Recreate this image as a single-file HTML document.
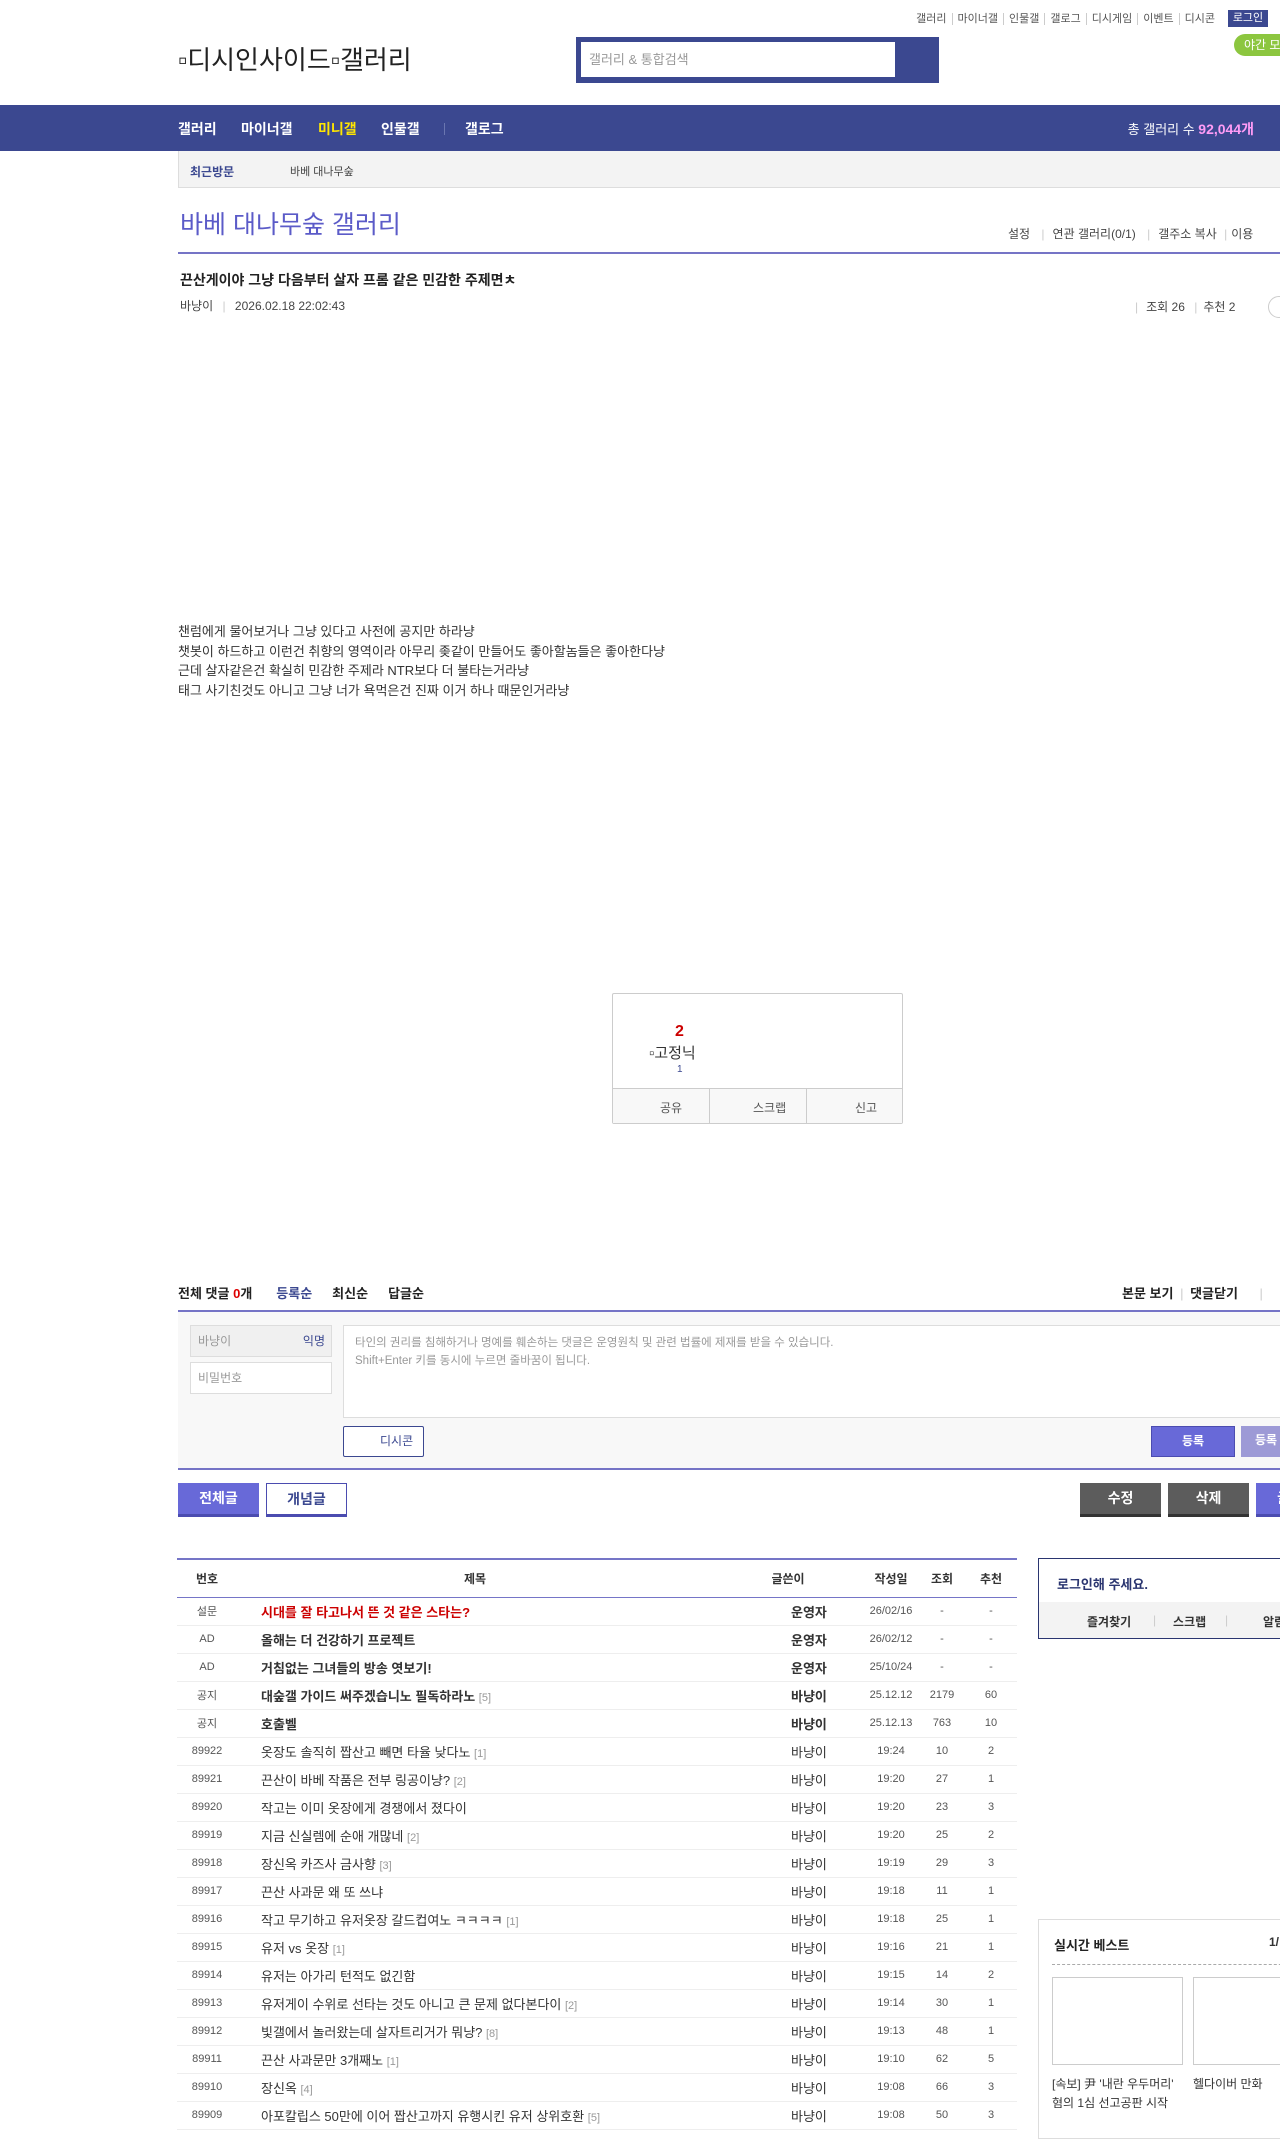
<!DOCTYPE html>
<html><head><meta charset="utf-8"><style>
*{margin:0;padding:0;box-sizing:border-box}
body{width:1280px;height:2124px;overflow:hidden;position:relative;background:#fff;font-family:"Liberation Sans","Noto Sans CJK KR",sans-serif;color:#333;font-size:12px}
.a{position:absolute;white-space:nowrap}
.util{top:10px;right:60px;font-size:11px;color:#555}
.util span{padding:0 5px;border-left:1px solid #ccc}
.util span:first-child{border:none}
.nav{left:0;top:105px;width:1280px;height:46px;background:#3b4890}
.nav b{position:absolute;top:14px;color:#fff;font-size:14px}
table{border-collapse:collapse;table-layout:fixed;position:absolute;left:177px;top:1558px;width:840px;font-size:12px}
th{height:38px;border-top:2px solid #7575c7;border-bottom:1px solid #7575c7;font-size:12px;color:#333}
td{height:28px;border-bottom:1px solid #eee;text-align:center;color:#333}
td.t{text-align:left;padding-left:24px;font-size:13px}
td.w{font-size:13px;text-align:left;padding-left:78px}
td.n{font-size:11px;color:#555}
.r{color:#999;font-size:11px}
.btn{position:absolute;height:34px;line-height:30px;text-align:center;font-size:14px;font-weight:bold}
</style></head><body>
<div class="a util"><span>갤러리</span><span>마이너갤</span><span>인물갤</span><span>갤로그</span><span>디시게임</span><span>이벤트</span><span>디시콘</span></div>
<div class="a" style="left:1228px;top:10px;width:40px;height:17px;background:#3b4890;color:#fff;font-size:11px;text-align:center;line-height:17px">로그인</div>
<div class="a" style="left:1234px;top:34px;width:60px;height:22px;background:#8cc63f;border-radius:11px;color:#fff;font-size:12px;line-height:22px;padding-left:10px">야간 모드</div>
<div class="a" style="left:178px;top:40px;font-size:26px;color:#222">▫디시인사이드▫갤러리</div>
<div class="a" style="left:576px;top:37px;width:363px;height:46px;background:#3b4890"></div>
<div class="a" style="left:581px;top:42px;width:314px;height:35px;background:#fff;color:#999;font-size:13px;line-height:35px;padding-left:8px">갤러리 &amp; 통합검색</div>
<div class="a nav"><b style="left:178px">갤러리</b><b style="left:241px">마이너갤</b><b style="left:318px;color:#ffe600">미니갤</b><b style="left:381px">인물갤</b><span style="position:absolute;left:444px;top:18px;width:1px;height:12px;background:#6a76b0"></span><b style="left:465px">갤로그</b><span style="position:absolute;right:26px;top:14px;color:#fff;font-size:13px">총 갤러리 수 <b style="position:static;color:#ff9cf6">92,044개</b></span></div>
<div class="a" style="left:178px;top:151px;width:1110px;height:37px;background:#f3f3f3;border:1px solid #ddd;border-top:none"></div>
<div class="a" style="left:190px;top:163px;font-size:12px;color:#3b4890;font-weight:bold">최근방문</div>
<div class="a" style="left:290px;top:163px;font-size:11px;color:#444">바베 대나무숲</div>
<div class="a" style="left:180px;top:205px;font-size:25px;color:#5b5bc8">바베 대나무숲 갤러리</div>
<div class="a" style="left:1008px;top:225px;font-size:12px;color:#444">설정 <span style="color:#ccc;margin:0 8px">|</span>연관 갤러리(0/1) <span style="color:#ccc;margin:0 8px">|</span>갤주소 복사 <span style="color:#ccc;margin:0 4px">|</span>이용</div>
<div class="a" style="left:178px;top:252px;width:1110px;height:2px;background:#7574c6"></div>
<div class="a" style="left:180px;top:270px;font-size:14px;font-weight:bold;color:#222">끈산게이야 그냥 다음부터 살자 프롬 같은 민감한 주제면ㅊ</div>
<div class="a" style="left:180px;top:297px;font-size:12px;color:#444">바냥이 <span style="color:#ccc;margin:0 6px">|</span> 2026.02.18 22:02:43</div>
<div class="a" style="left:1135px;top:298px;font-size:12px;color:#444"><span style="color:#ccc;margin-right:8px">|</span>조회 26 <span style="color:#ccc;margin:0 6px">|</span>추천 2</div>
<div class="a" style="left:1268px;top:296px;width:22px;height:22px;border:1px solid #ccc;border-radius:11px"></div>
<div class="a" style="left:178px;top:622px;font-size:13px;line-height:19.7px;color:#333">챈럼에게 물어보거나 그냥 있다고 사전에 공지만 하라냥<br>챗봇이 하드하고 이런건 취향의 영역이라 아무리 좆같이 만들어도 좋아할놈들은 좋아한다냥<br>근데 살자같은건 확실히 민감한 주제라 NTR보다 더 불타는거라냥<br>태그 사기친것도 아니고 그냥 너가 욕먹은건 진짜 이거 하나 때문인거라냥</div>
<div class="a" style="left:612px;top:993px;width:291px;height:131px;border:1px solid #ccc;border-radius:2px">
<div class="a" style="left:62px;top:29px;font-size:16px;font-weight:bold;color:#c00">2</div>
<div class="a" style="left:36px;top:48px;font-size:15px;color:#333">▫고정닉</div>
<div class="a" style="left:64px;top:70px;font-size:10px;color:#3b4890">1</div>
<div class="a" style="left:0;top:94px;width:289px;height:35px;background:#f8f8f8;border-top:1px solid #ccc;font-size:12px;color:#555">
<span class="a" style="left:47px;top:10px">공유</span><span class="a" style="left:96px;top:0;width:1px;height:35px;background:#ccc"></span><span class="a" style="left:140px;top:10px">스크랩</span><span class="a" style="left:193px;top:0;width:1px;height:35px;background:#ccc"></span><span class="a" style="left:242px;top:10px">신고</span></div></div>
<div class="a" style="left:178px;top:1283px;font-size:13px;font-weight:bold;color:#222">전체 댓글 <span style="color:#d00">0</span>개<span style="color:#3b4890;margin-left:24px">등록순</span><span style="margin-left:20px">최신순</span><span style="margin-left:20px">답글순</span></div>
<div class="a" style="left:1122px;top:1283px;font-size:13px;font-weight:bold;color:#222">본문 보기 <span style="color:#ccc;font-weight:normal;margin:0 3px">|</span> 댓글닫기 <span style="color:#ccc;font-weight:normal;margin-left:18px">|</span></div>
<div class="a" style="left:178px;top:1310px;width:1110px;height:160px;background:#f8f8f8;border-top:2px solid #7574c6;border-bottom:2px solid #7574c6"></div>
<div class="a" style="left:190px;top:1325px;width:142px;height:32px;background:#f0f0f0;border:1px solid #ddd;font-size:12px;color:#999;line-height:30px;padding-left:7px">바냥이<span style="position:absolute;right:6px;color:#3b4890">익명</span></div>
<div class="a" style="left:190px;top:1362px;width:142px;height:32px;background:#fff;border:1px solid #ddd;font-size:12px;color:#999;line-height:30px;padding-left:7px">비밀번호</div>
<div class="a" style="left:343px;top:1325px;width:950px;height:93px;background:#fff;border:1px solid #ddd;font-size:11.5px;color:#999;line-height:18px;padding:8px 11px">타인의 권리를 침해하거나 명예를 훼손하는 댓글은 운영원칙 및 관련 법률에 제재를 받을 수 있습니다.<br>Shift+Enter 키를 동시에 누르면 줄바꿈이 됩니다.</div>
<div class="a" style="left:343px;top:1426px;width:81px;height:31px;background:#fff;border:1px solid #3b4890;border-radius:2px;font-size:12px;color:#3b4890;line-height:29px;padding-left:36px">디시콘</div>
<div class="a" style="left:1151px;top:1426px;width:84px;height:31px;background:#6869d8;border:1px solid #4b4cb0;color:#fff;font-size:12px;font-weight:bold;text-align:center;line-height:29px">등록</div>
<div class="a" style="left:1241px;top:1426px;width:84px;height:31px;background:#9d9ad6;color:#fff;font-size:12px;font-weight:bold;line-height:29px;padding-left:14px">등록</div>
<div class="btn" style="left:178px;top:1483px;width:81px;background:#6869d8;color:#fff;border-bottom:3px solid #4b4cb0">전체글</div>
<div class="btn" style="left:266px;top:1483px;width:81px;background:#fff;color:#3b4890;border:1px solid #4b4cb0;border-bottom:3px solid #4b4cb0">개념글</div>
<div class="btn" style="left:1080px;top:1483px;width:81px;background:#5c5c5c;color:#fff;border-bottom:3px solid #333">수정</div>
<div class="btn" style="left:1168px;top:1483px;width:81px;background:#5c5c5c;color:#fff;border-bottom:3px solid #333">삭제</div>
<div class="btn" style="left:1256px;top:1483px;width:81px;background:#6869d8;color:#fff;border-bottom:3px solid #4b4cb0">글쓰기</div>
<table>
<colgroup><col style="width:60px"><col style="width:476px"><col style="width:150px"><col style="width:56px"><col style="width:46px"><col style="width:52px"></colgroup>
<tr><th>번호</th><th>제목</th><th>글쓴이</th><th>작성일</th><th>조회</th><th>추천</th></tr>
<tr><td class="n">설문</td><td class="t" style="color:#c00;font-weight:bold">시대를 잘 타고나서 뜬 것 같은 스타는?</td><td class="w"><b>운영자</b></td><td class="n">26/02/16</td><td class="n">-</td><td class="n">-</td></tr>
<tr><td class="n">AD</td><td class="t"><b>올해는 더 건강하기 프로젝트</b></td><td class="w"><b>운영자</b></td><td class="n">26/02/12</td><td class="n">-</td><td class="n">-</td></tr>
<tr><td class="n">AD</td><td class="t"><b>거침없는 그녀들의 방송 엿보기!</b></td><td class="w"><b>운영자</b></td><td class="n">25/10/24</td><td class="n">-</td><td class="n">-</td></tr>
<tr><td class="n">공지</td><td class="t"><b>대숲갤 가이드 써주겠습니노 필독하라노</b> <span class="r">[5]</span></td><td class="w"><b>바냥이</b></td><td class="n">25.12.12</td><td class="n">2179</td><td class="n">60</td></tr>
<tr><td class="n">공지</td><td class="t"><b>호출벨</b></td><td class="w"><b>바냥이</b></td><td class="n">25.12.13</td><td class="n">763</td><td class="n">10</td></tr>
<tr><td class="n">89922</td><td class="t">옷장도 솔직히 짭산고 빼면 타율 낮다노 <span class="r">[1]</span></td><td class="w">바냥이</td><td class="n">19:24</td><td class="n">10</td><td class="n">2</td></tr>
<tr><td class="n">89921</td><td class="t">끈산이 바베 작품은 전부 링공이냥? <span class="r">[2]</span></td><td class="w">바냥이</td><td class="n">19:20</td><td class="n">27</td><td class="n">1</td></tr>
<tr><td class="n">89920</td><td class="t">작고는 이미 옷장에게 경쟁에서 졌다이</td><td class="w">바냥이</td><td class="n">19:20</td><td class="n">23</td><td class="n">3</td></tr>
<tr><td class="n">89919</td><td class="t">지금 신실렘에 순애 개많네 <span class="r">[2]</span></td><td class="w">바냥이</td><td class="n">19:20</td><td class="n">25</td><td class="n">2</td></tr>
<tr><td class="n">89918</td><td class="t">장신옥 카즈사 금사향 <span class="r">[3]</span></td><td class="w">바냥이</td><td class="n">19:19</td><td class="n">29</td><td class="n">3</td></tr>
<tr><td class="n">89917</td><td class="t">끈산 사과문 왜 또 쓰냐</td><td class="w">바냥이</td><td class="n">19:18</td><td class="n">11</td><td class="n">1</td></tr>
<tr><td class="n">89916</td><td class="t">작고 무기하고 유저옷장 갈드컵여노 ㅋㅋㅋㅋ <span class="r">[1]</span></td><td class="w">바냥이</td><td class="n">19:18</td><td class="n">25</td><td class="n">1</td></tr>
<tr><td class="n">89915</td><td class="t">유저 vs 옷장 <span class="r">[1]</span></td><td class="w">바냥이</td><td class="n">19:16</td><td class="n">21</td><td class="n">1</td></tr>
<tr><td class="n">89914</td><td class="t">유저는 아가리 턴적도 없긴함</td><td class="w">바냥이</td><td class="n">19:15</td><td class="n">14</td><td class="n">2</td></tr>
<tr><td class="n">89913</td><td class="t">유저게이 수위로 선타는 것도 아니고 큰 문제 없다본다이 <span class="r">[2]</span></td><td class="w">바냥이</td><td class="n">19:14</td><td class="n">30</td><td class="n">1</td></tr>
<tr><td class="n">89912</td><td class="t">빛갤에서 놀러왔는데 살자트리거가 뭐냥? <span class="r">[8]</span></td><td class="w">바냥이</td><td class="n">19:13</td><td class="n">48</td><td class="n">1</td></tr>
<tr><td class="n">89911</td><td class="t">끈산 사과문만 3개째노 <span class="r">[1]</span></td><td class="w">바냥이</td><td class="n">19:10</td><td class="n">62</td><td class="n">5</td></tr>
<tr><td class="n">89910</td><td class="t">장신옥 <span class="r">[4]</span></td><td class="w">바냥이</td><td class="n">19:08</td><td class="n">66</td><td class="n">3</td></tr>
<tr><td class="n">89909</td><td class="t">아포칼립스 50만에 이어 짭산고까지 유행시킨 유저 상위호환 <span class="r">[5]</span></td><td class="w">바냥이</td><td class="n">19:08</td><td class="n">50</td><td class="n">3</td></tr>
</table>
<div class="a" style="left:1038px;top:1558px;width:260px;height:81px;border:1px solid #2a3570">
<div class="a" style="left:18px;top:15px;font-size:13px;font-weight:bold;color:#2a3570">로그인해 주세요.</div>
<div class="a" style="left:0;top:43px;width:260px;height:36px;background:#f3f3f3;font-size:12px;font-weight:bold;color:#333"><span class="a" style="left:48px;top:11px">즐겨찾기</span><span class="a" style="left:114px;top:11px;color:#ccc;font-weight:normal">|</span><span class="a" style="left:134px;top:11px">스크랩</span><span class="a" style="left:186px;top:11px;color:#ccc;font-weight:normal">|</span><span class="a" style="left:224px;top:11px">알림</span></div></div>
<div class="a" style="left:1038px;top:1919px;width:260px;height:220px;border:1px solid #ddd">
<div class="a" style="left:15px;top:15px;font-size:13px;font-weight:bold;color:#222">실시간 베스트</div>
<div class="a" style="left:230px;top:15px;font-size:12px;font-weight:bold">1/</div>
<div class="a" style="left:13px;top:44px;width:250px;border-top:1px dashed #aaa"></div>
<div class="a" style="left:13px;top:57px;width:131px;height:88px;border:1px solid #ccc"></div>
<div class="a" style="left:154px;top:57px;width:131px;height:88px;border:1px solid #ccc"></div>
<div class="a" style="left:13px;top:155px;font-size:12px;line-height:19px;color:#333">[속보] 尹 '내란 우두머리'<br>혐의 1심 선고공판 시작</div>
<div class="a" style="left:154px;top:155px;font-size:12px;color:#333">헬다이버 만화</div></div>
</body></html>
